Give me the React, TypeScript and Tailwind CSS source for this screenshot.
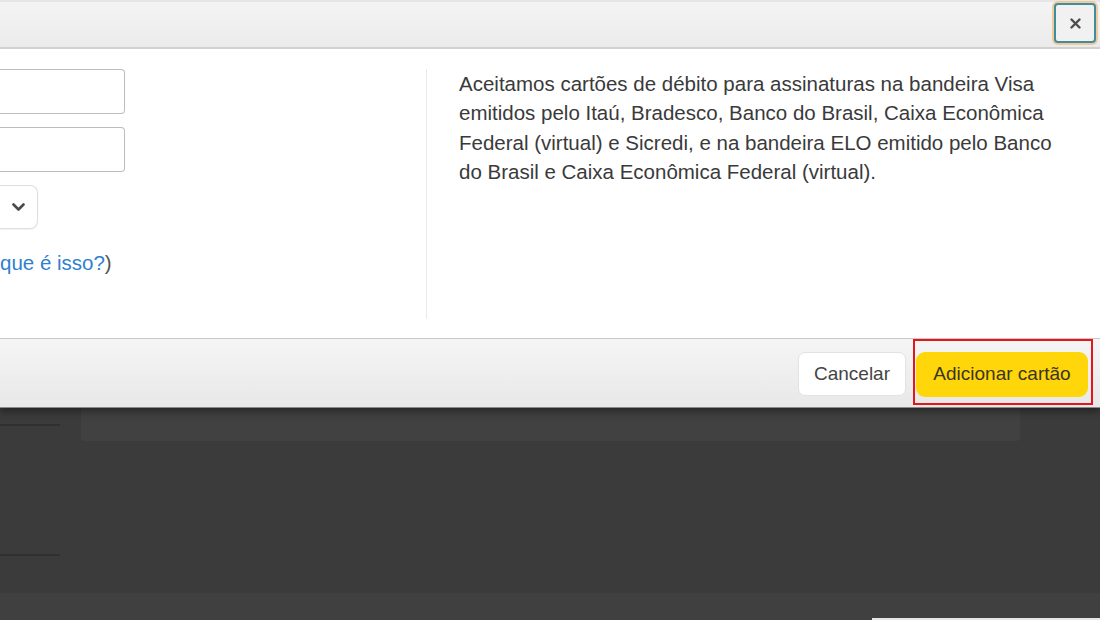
import React from "react";

const Chevron: React.FC = () => (
  <svg width="13" height="9" viewBox="0 0 13 9" aria-hidden>
    <path d="M1.5 1.5 L6.5 6.5 L11.5 1.5" fill="none" stroke="#4a4a4a" strokeWidth="2.6" strokeLinecap="round" strokeLinejoin="round" />
  </svg>
);

const CloseIcon: React.FC = () => (
  <svg width="11" height="11" viewBox="0 0 11 11" aria-hidden>
    <path d="M1.5 1.5 L9.5 9.5 M9.5 1.5 L1.5 9.5" stroke="#4d4d4d" strokeWidth="2.4" strokeLinecap="round" />
  </svg>
);

const App: React.FC = () => {
  return (
    <div className="w-[1100px] h-[620px] overflow-hidden bg-[#3b3b3b] flex flex-col font-['Liberation_Sans',Arial,sans-serif]">
      {/* modal */}
      <div className="relative z-10 shadow-[0_3px_8px_rgba(0,0,0,0.45)]">
        <header className="h-[49px] border-t-2 border-t-[#e6e6e6] border-b-2 border-b-[#d0d0d0] bg-linear-to-b from-[#f4f4f4] to-[#ebebeb] flex items-start justify-end pr-[4px] pt-[1px]">
          <button className="w-[42px] h-[40px] rounded-[4px] border-2 border-[#3f8f98] bg-[#f1f1f1] shadow-[0_0_0_2px_rgba(243,176,110,0.6)] flex items-center justify-center">
            <CloseIcon />
          </button>
        </header>

        <div className="h-[289px] bg-white flex pt-[20px]">
          <div className="w-[426px] flex flex-col">
            <div className="h-[45px] w-[125px] border border-l-0 border-[#bdbdbd] rounded-r-[4px]" />
            <div className="mt-[13px] h-[45px] w-[125px] border border-l-0 border-[#bdbdbd] rounded-r-[4px]" />
            <div className="mt-[13px] h-[44px] w-[38px] border border-l-0 border-[#dedede] rounded-r-[8px] shadow-[0_1px_2px_rgba(0,0,0,0.06)] flex items-center justify-end pr-[12px]">
              <Chevron />
            </div>
            <p className="mt-[19px] text-[20.5px] leading-[29px] whitespace-nowrap text-[#555]">
              <span className="text-[#2f7fcf]">que é isso?</span>)
            </p>
          </div>

          <div className="h-[250px] border-l border-[#e9e9e9] pl-[32px]">
            <p className="w-[605px] text-[20.5px] leading-[29.4px] text-[#3a3a3a]">
              Aceitamos cartões de débito para assinaturas na bandeira Visa emitidos pelo Itaú, Bradesco, Banco do Brasil, Caixa Econômica Federal (virtual) e Sicredi, e na bandeira ELO emitido pelo Banco do Brasil e Caixa Econômica Federal (virtual).
            </p>
          </div>
        </div>

        <footer className="h-[70px] border-t border-t-[#c8c8c8] border-b border-b-[#8a8a8a] bg-linear-to-b from-[#f5f5f5] to-[#e8e8e8] flex items-start justify-end pr-[7px]">
          <button className="mt-[13px] h-[44px] w-[108px] rounded-[7px] bg-white border border-[#e2e2e2] text-[19px] text-[#444]">
            Cancelar
          </button>
          <div className="ml-[7px] h-[66px] border-2 border-[#e3161b] pl-[1px] pr-[3px] pt-[11px]">
            <button className="h-[45px] w-[172px] rounded-[9px] bg-[#ffd60a] text-[19px] text-[#3b3520]">
              Adicionar cartão
            </button>
          </div>
        </footer>
      </div>

      {/* page behind */}
      <div className="flex-1 flex flex-col">
        <div className="flex-1 flex">
          <div className="w-[60px] pt-[16px]">
            <div className="h-[132px] border-t-2 border-b-2 border-[#303030]" />
          </div>
          <div className="ml-[21px] w-[939px] h-[33px] bg-[#414141] rounded-b-[4px]" />
        </div>
        <div className="h-[27px] bg-[#404040] flex justify-end items-end">
          <div className="w-[228px] h-[2px] bg-[#e6e6e6]" />
        </div>
      </div>
    </div>
  );
};

export default App;
